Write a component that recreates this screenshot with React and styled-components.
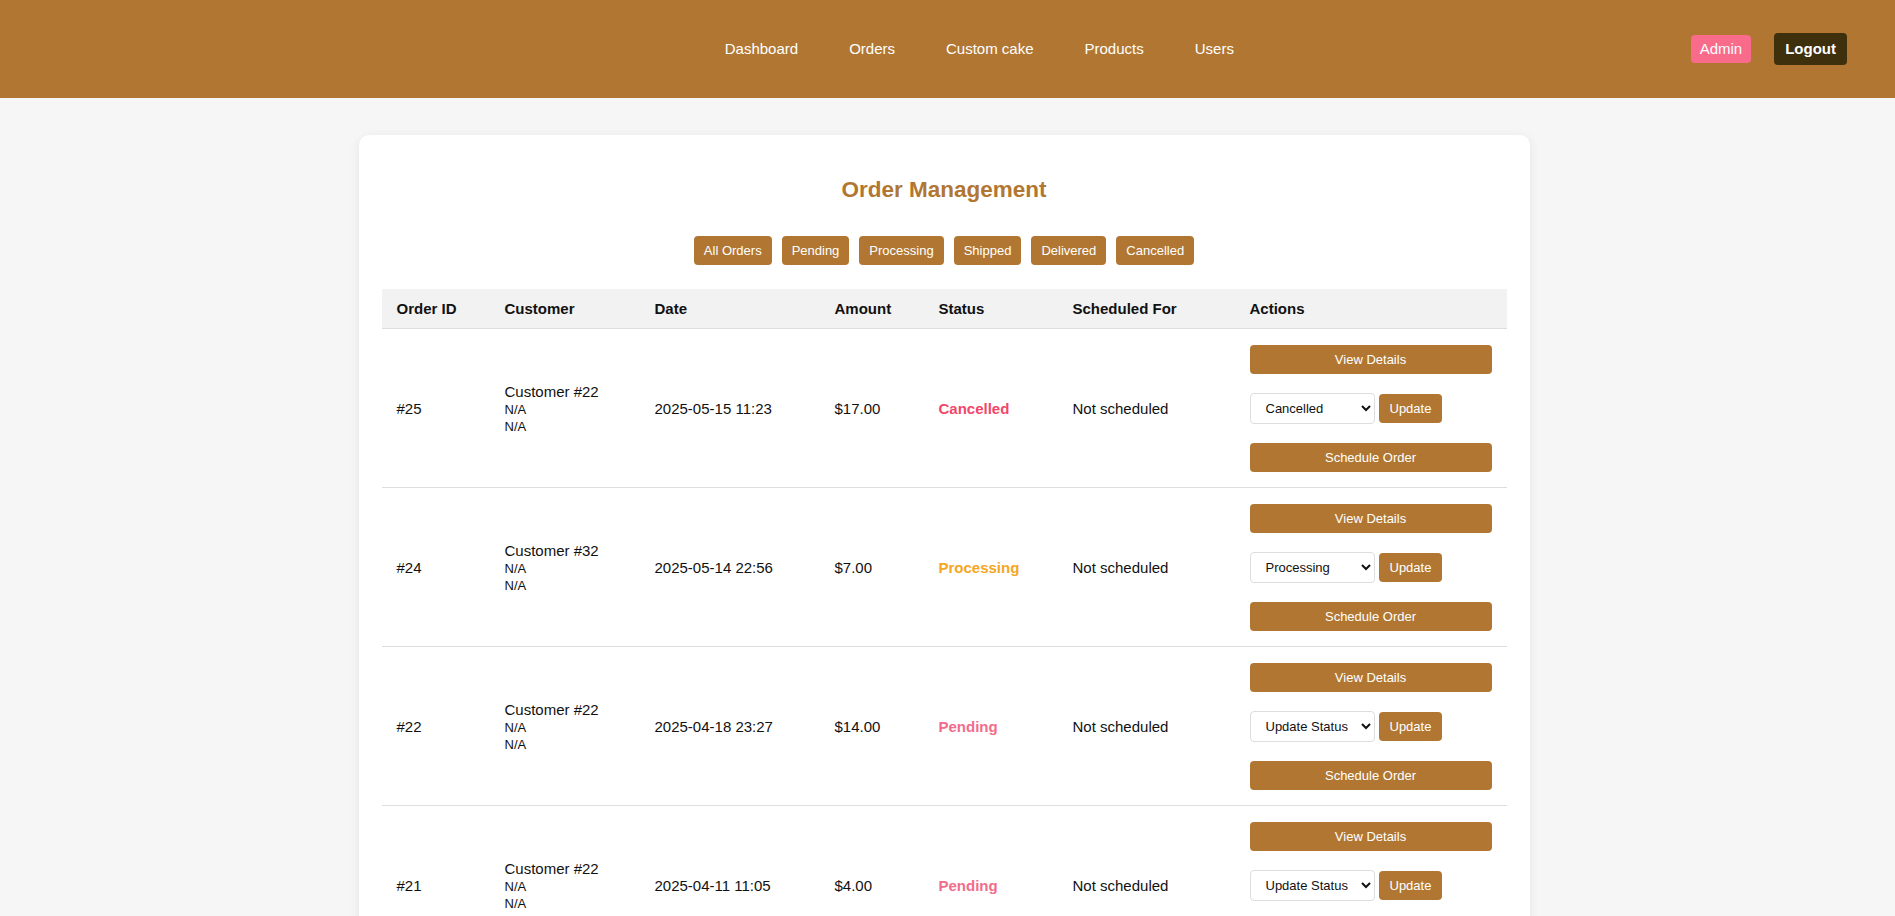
import React from 'react';
import styled, { createGlobalStyle } from 'styled-components';

const brown = '#b17732';

const GlobalStyle = createGlobalStyle`
  body {
    margin: 0;
    background: #f6f6f7;
    font-family: "Liberation Sans", Arial, sans-serif;
    color: #111;
  }
`;

const HeaderBar = styled.header`
  height: 98px;
  background: ${brown};
  display: flex;
  align-items: center;
  justify-content: space-between;
  padding: 0 48px;
  box-sizing: border-box;
`;

const LogoSlot = styled.div`
  width: 220px;
`;

const Nav = styled.nav`
  display: flex;
  gap: 51px;
`;

const NavLink = styled.a`
  color: #fff;
  font-size: 15px;
  line-height: 18px;
  text-decoration: none;
  cursor: pointer;
`;

const UserBox = styled.div`
  display: flex;
  align-items: center;
  gap: 23px;
`;

const RoleBadge = styled.span`
  background: #f86b8b;
  color: #fff;
  font-size: 15px;
  line-height: 18px;
  padding: 5px 9px;
  border-radius: 4px;
`;

const LogoutButton = styled.button`
  background: #3e300c;
  color: #fff;
  border: none;
  font-family: inherit;
  font-weight: bold;
  font-size: 15px;
  line-height: 18px;
  padding: 7px 11px;
  border-radius: 4px;
  cursor: pointer;
`;

const Card = styled.main`
  width: 1171px;
  box-sizing: border-box;
  margin: 37px 0 40px calc(50% - 589px);
  padding: 23px;
  background: #fff;
  border-radius: 10px;
  box-shadow: 0 2px 12px rgba(0, 0, 0, 0.07);
`;

const Title = styled.h2`
  margin: 19px 0 33px;
  text-align: center;
  color: ${brown};
  font-size: 22.5px;
  line-height: 26px;
  font-weight: bold;
`;

const Filters = styled.div`
  display: flex;
  justify-content: center;
  gap: 10px;
  margin-bottom: 24px;
`;

const FilterButton = styled.button`
  background: ${brown};
  color: #fff;
  border: none;
  font-family: inherit;
  font-size: 13px;
  line-height: 15px;
  padding: 7px 10px;
  border-radius: 4px;
  cursor: pointer;
`;

const Table = styled.table`
  width: 100%;
  border-collapse: collapse;
  table-layout: fixed;
`;

const HeadCell = styled.th`
  background: #f2f2f2;
  text-align: left;
  font-size: 15px;
  line-height: 17px;
  font-weight: bold;
  padding: 11px 15px;
  border-bottom: 1px solid #ddd;
`;

const Cell = styled.td`
  font-size: 15px;
  line-height: 18px;
  padding: 16px 15px 15px;
  border-bottom: 1px solid #ddd;
  vertical-align: middle;
`;

const SubLine = styled.div`
  font-size: 13px;
  line-height: 17px;
`;

const statusColors = {
  Cancelled: '#f0476a',
  Processing: '#f5a623',
  Pending: '#f26d8b',
};

const Status = styled.span`
  font-weight: bold;
  color: ${(p) => statusColors[p.$status] || '#333'};
`;

const ActionStack = styled.div`
  display: flex;
  flex-direction: column;
  gap: 19px;
`;

const WideButton = styled.button`
  width: 100%;
  height: 29px;
  background: ${brown};
  color: #fff;
  border: none;
  font-family: inherit;
  font-size: 13px;
  border-radius: 4px;
  cursor: pointer;
`;

const StatusRow = styled.div`
  display: flex;
  align-items: center;
  gap: 4px;
`;

const StatusSelect = styled.select`
  width: 125px;
  height: 31px;
  padding: 0 6px 0 11px;
  border: 1px solid #ddd;
  border-radius: 4px;
  background: #fff;
  font-family: inherit;
  font-size: 13px;
  color: #111;
`;

const UpdateButton = styled.button`
  height: 29px;
  background: ${brown};
  color: #fff;
  border: none;
  font-family: inherit;
  font-size: 13px;
  padding: 0 11px;
  border-radius: 4px;
  cursor: pointer;
`;

const orders = [
  { id: 25, customer: 22, date: '2025-05-15 11:23', amount: '$17.00', status: 'Cancelled', select: 'Cancelled' },
  { id: 24, customer: 32, date: '2025-05-14 22:56', amount: '$7.00', status: 'Processing', select: 'Processing' },
  { id: 22, customer: 22, date: '2025-04-18 23:27', amount: '$14.00', status: 'Pending', select: 'Update Status' },
  { id: 21, customer: 22, date: '2025-04-11 11:05', amount: '$4.00', status: 'Pending', select: 'Update Status' },
  { id: 20, customer: 18, date: '2025-04-09 16:42', amount: '$12.00', status: 'Pending', select: 'Update Status' },
];

const filters = ['All Orders', 'Pending', 'Processing', 'Shipped', 'Delivered', 'Cancelled'];
const statusOptions = ['Update Status', 'Pending', 'Processing', 'Shipped', 'Delivered', 'Cancelled'];
const columns = [
  ['Order ID', 108],
  ['Customer', 150],
  ['Date', 180],
  ['Amount', 104],
  ['Status', 134],
  ['Scheduled For', 177],
  ['Actions', 272],
];

function OrderRow({ order }) {
  return (
    <tr>
      <Cell>#{order.id}</Cell>
      <Cell>
        <div>Customer #{order.customer}</div>
        <SubLine>N/A</SubLine>
        <SubLine>N/A</SubLine>
      </Cell>
      <Cell>{order.date}</Cell>
      <Cell>{order.amount}</Cell>
      <Cell>
        <Status $status={order.status}>{order.status}</Status>
      </Cell>
      <Cell>Not scheduled</Cell>
      <Cell>
        <ActionStack>
          <WideButton>View Details</WideButton>
          <StatusRow>
            <StatusSelect defaultValue={order.select}>
              {statusOptions.map((s) => (
                <option key={s} value={s}>{s}</option>
              ))}
            </StatusSelect>
            <UpdateButton>Update</UpdateButton>
          </StatusRow>
          <WideButton>Schedule Order</WideButton>
        </ActionStack>
      </Cell>
    </tr>
  );
}

export default function App() {
  return (
    <>
      <GlobalStyle />
      <HeaderBar>
        <LogoSlot />
        <Nav>
          <NavLink>Dashboard</NavLink>
          <NavLink>Orders</NavLink>
          <NavLink>Custom cake</NavLink>
          <NavLink>Products</NavLink>
          <NavLink>Users</NavLink>
        </Nav>
        <UserBox>
          <RoleBadge>Admin</RoleBadge>
          <LogoutButton>Logout</LogoutButton>
        </UserBox>
      </HeaderBar>
      <Card>
        <Title>Order Management</Title>
        <Filters>
          {filters.map((f) => (
            <FilterButton key={f}>{f}</FilterButton>
          ))}
        </Filters>
        <Table>
          <colgroup>
            {columns.map(([name, w]) => (
              <col key={name} style={{ width: w }} />
            ))}
          </colgroup>
          <thead>
            <tr>
              {columns.map(([name]) => (
                <HeadCell key={name}>{name}</HeadCell>
              ))}
            </tr>
          </thead>
          <tbody>
            {orders.map((o) => (
              <OrderRow key={o.id} order={o} />
            ))}
          </tbody>
        </Table>
      </Card>
    </>
  );
}
